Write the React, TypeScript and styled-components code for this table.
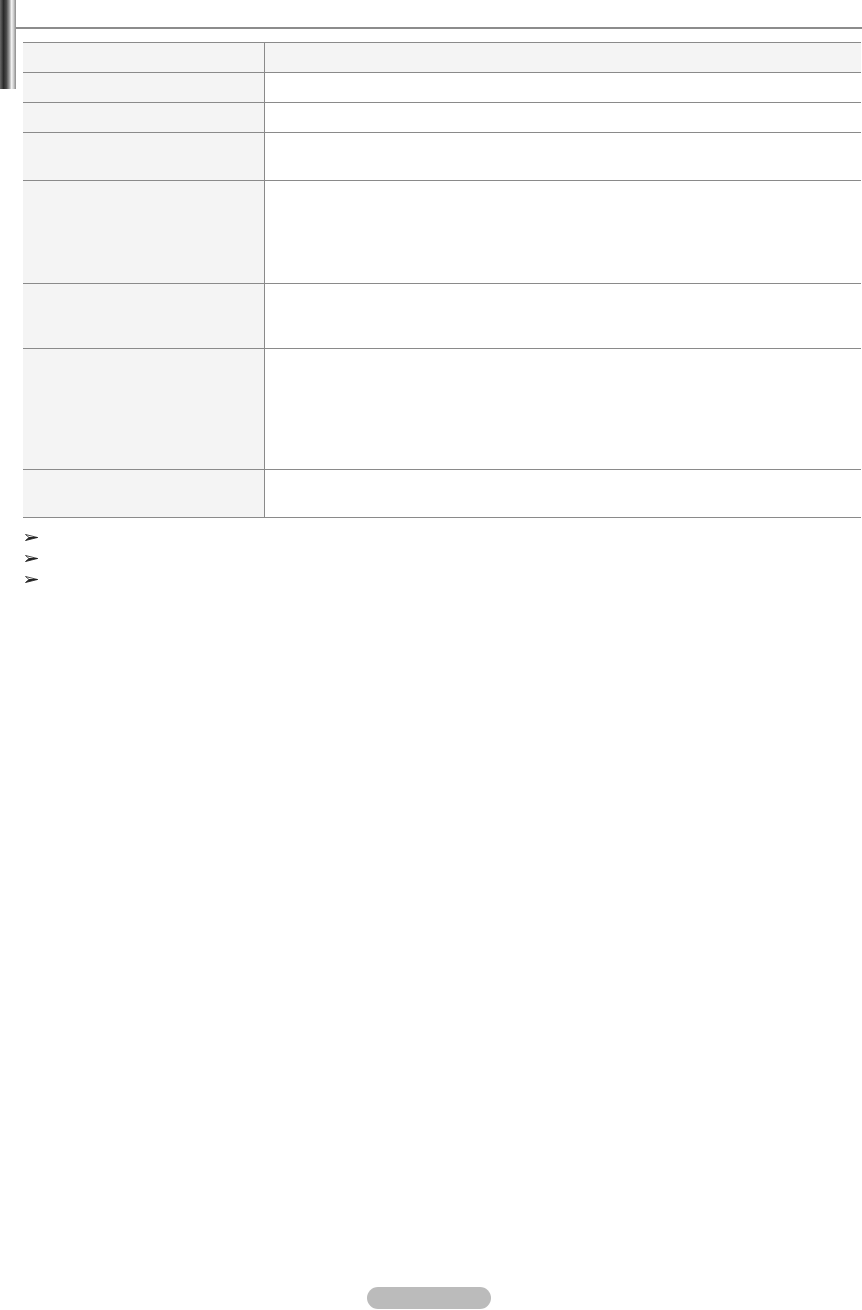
import React from "react";
import styled, { createGlobalStyle } from "styled-components";

const GlobalStyle = createGlobalStyle`
  html, body { margin: 0; padding: 0; background: #ffffff; }
  body { font-family: "DejaVu Sans", "Liberation Sans", sans-serif; color: #222; }
  * { box-sizing: border-box; }
`;

const Page = styled.div`
  display: flex;
  flex-direction: column;
  width: 862px;
  height: 1310px;
  overflow: hidden;
`;

const Top = styled.div`
  display: flex;
  align-items: flex-start;
`;

const SideTab = styled.div`
  flex: 0 0 16px;
  height: 89px;
  background: linear-gradient(
    to right,
    #6a6a6a 0%,
    #2a2a2a 22%,
    #4a4a4a 40%,
    #9a9a9a 58%,
    #f2f2f2 72%,
    #d8d8d8 82%,
    #8a8a8a 100%
  );
`;

const Main = styled.div`
  flex: 1;
  display: flex;
  flex-direction: column;
`;

const TopRule = styled.div`
  margin-top: 27px;
  height: 2px;
  background: #8c8c8c;
`;

const Table = styled.div`
  margin: 13px 1px 0 7px;
  display: flex;
  flex-direction: column;
  border-bottom: 1px solid #8a8a8a;
`;

const Row = styled.div<{ $h: number; $head?: boolean }>`
  display: grid;
  grid-template-columns: 242px 1fr;
  height: ${(p) => p.$h}px;
  border-top: 1px solid #8a8a8a;
  background: ${(p) => (p.$head ? "#f4f4f4" : "#ffffff")};
`;

const LabelCell = styled.div`
  background: #f4f4f4;
  border-right: 1px solid #8a8a8a;
  font-size: 12px;
  padding: 6px 8px;
`;

const ValueCell = styled.div`
  font-size: 12px;
  padding: 6px 8px;
`;

const Notes = styled.ul`
  list-style: none;
  margin: 9px 0 0 9px;
  padding: 0;
`;

const Note = styled.li`
  display: flex;
  align-items: center;
  height: 21px;
  font-size: 12px;
  line-height: 21px;
`;

const Marker = styled.svg`
  display: block;
  width: 13px;
  height: 7px;
  margin-right: 4px;
`;

const Footer = styled.div`
  margin-top: auto;
  display: flex;
  justify-content: center;
  padding: 0 4px 1px 0;
`;

const PagePill = styled.div`
  width: 124px;
  height: 22px;
  border-radius: 11px;
  background: #bbbbbb;
`;

const rows = [30, 30, 30, 48, 103, 65, 121, 48];

const Arrowhead = () => (
  <Marker viewBox="0 0 13 7">
    <polygon points="0.5,0.5 12.5,3.5 4,3.5" fill="#ffffff" stroke="#222" strokeWidth="0.8" strokeLinejoin="round" />
    <polygon points="4,3.5 12.5,3.5 0.5,6.5" fill="#222" stroke="#222" strokeWidth="0.8" strokeLinejoin="round" />
  </Marker>
);

export default function App() {
  return (
    <>
      <GlobalStyle />
      <Page>
        <Top>
          <SideTab />
          <Main>
            <TopRule />
            <Table>
              {rows.map((h, i) => (
                <Row key={i} $h={h} $head={i === 0}>
                  <LabelCell />
                  <ValueCell />
                </Row>
              ))}
            </Table>
            <Notes>
              {[0, 1, 2].map((i) => (
                <Note key={i}>
                  <Arrowhead />
                </Note>
              ))}
            </Notes>
          </Main>
        </Top>
        <Footer>
          <PagePill />
        </Footer>
      </Page>
    </>
  );
}
